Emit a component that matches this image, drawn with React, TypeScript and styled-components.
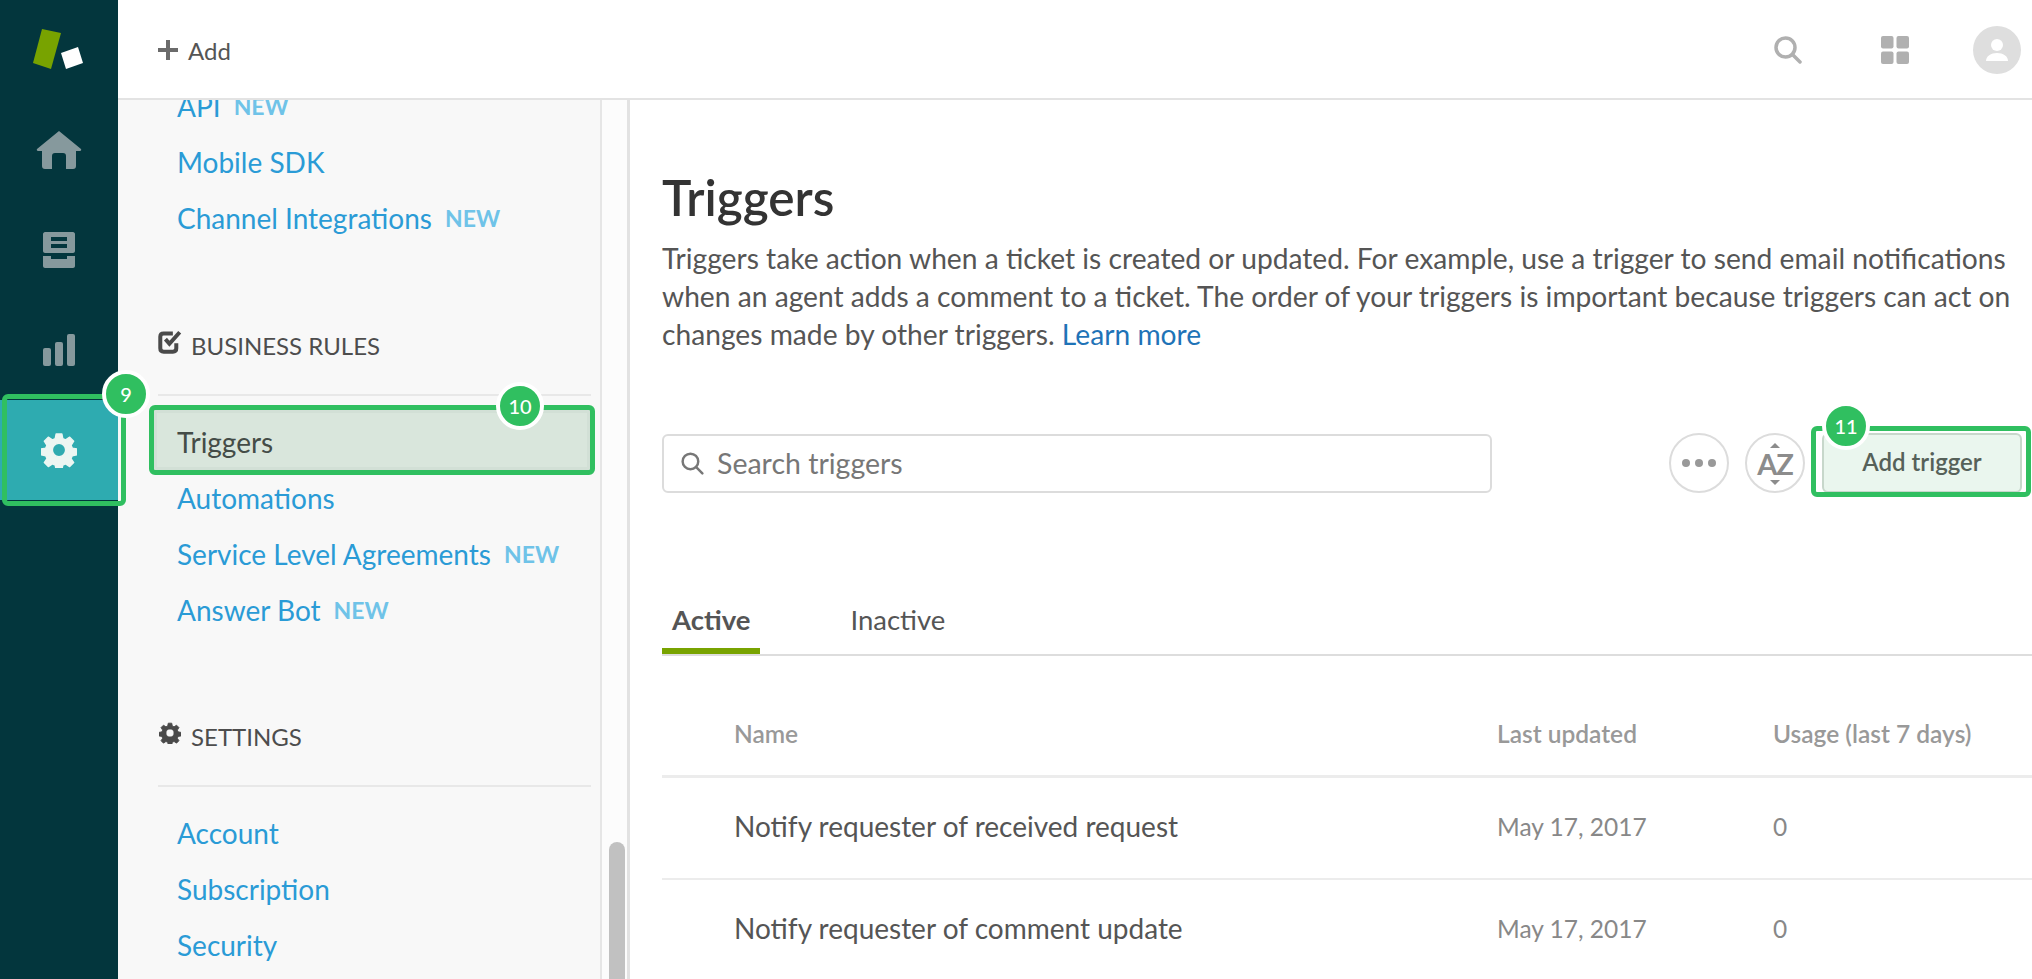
import React from 'react';
import styled, { createGlobalStyle } from 'styled-components';

const FONT = '"Lato", "Open Sans", sans-serif';

const GlobalStyle = createGlobalStyle`
  html, body {
    margin: 0;
    padding: 0;
    height: 100%;
    overflow: hidden;
    background: #fff;
    font-family: ${FONT};
  }
  * { box-sizing: border-box; }
`;

const Page = styled.div`
  display: flex;
  width: 2032px;
  height: 979px;
  overflow: hidden;
`;

const Rail = styled.nav`
  width: 118px;
  flex-shrink: 0;
  background: #03363d;
  display: flex;
  flex-direction: column;
  position: relative;
  z-index: 2;
`;

const LogoBox = styled.div`
  height: 100px;
  display: flex;
  align-items: flex-start;
  justify-content: center;
`;

const RailItem = styled.div<{ $active?: boolean }>`
  height: 100px;
  display: flex;
  align-items: center;
  justify-content: center;
  position: relative;
  background: ${(p) => (p.$active ? '#2eabb0' : 'transparent')};
`;

const RailOutline = styled.div`
  position: absolute;
  left: 2px;
  top: -6px;
  width: 124px;
  height: 112px;
  border: 5px solid #30bf60;
  border-radius: 6px;
`;

const Badge = styled.div`
  position: absolute;
  width: 48px;
  height: 48px;
  border-radius: 50%;
  background: #30bf60;
  border: 4px solid #fff;
  color: #fff;
  font-size: 20px;
  font-weight: 500;
  display: flex;
  align-items: center;
  justify-content: center;
  z-index: 3;
`;

const RailBadge = styled(Badge)`
  left: 102px;
  top: -30px;
`;

const Right = styled.div`
  flex: 1;
  display: flex;
  flex-direction: column;
  min-width: 0;
`;

const Header = styled.header`
  height: 100px;
  flex-shrink: 0;
  background: #fff;
  border-bottom: 2px solid #e3e3e3;
  display: flex;
  align-items: center;
  padding: 2px 11px 0 40px;
  position: relative;
  z-index: 1;
`;

const AddButton = styled.div`
  display: flex;
  align-items: center;
  gap: 10px;
  color: #555;
  font-size: 24px;
  flex: 1;
`;

const HeaderIcons = styled.div`
  display: flex;
  align-items: center;
  gap: 79px;
`;

const Avatar = styled.div`
  width: 48px;
  height: 48px;
  border-radius: 50%;
  background: #dedede;
  display: flex;
  align-items: center;
  justify-content: center;
  margin-left: -15px;
`;

const Body = styled.div`
  flex: 1;
  display: flex;
  min-height: 0;
`;

const Sidebar = styled.aside`
  width: 484px;
  flex-shrink: 0;
  background: #f8f8f8;
  border-right: 2px solid #e6e6e6;
  overflow: hidden;
`;

const SideInner = styled.div`
  margin-top: -22px;
  padding: 0 9px 0 40px;
`;

const SideLink = styled.div<{ $active?: boolean }>`
  height: 56px;
  padding-left: 19px;
  display: flex;
  align-items: center;
  gap: 13px;
  font-size: 28px;
  color: ${(p) => (p.$active ? '#444c47' : '#2a9bd6')};
  position: relative;
`;

const New = styled.span`
  color: #6fc3e8;
  font-size: 23px;
  font-weight: 700;
`;

const SideHeading = styled.div<{ $top: number }>`
  margin-top: ${(p) => p.$top}px;
  height: 70px;
  padding-bottom: 28px;
  display: flex;
  align-items: center;
  gap: 9px;
  font-size: 24px;
  color: #4d4d4d;
  & > svg {
    margin-top: -6px;
  }
`;

const SideRule = styled.div`
  height: 2px;
  background: #e8e8e8;
  margin-bottom: 18px;
`;

const TriggerHighlight = styled.div`
  position: absolute;
  left: -9px;
  right: -4px;
  top: -9px;
  bottom: -5px;
  border: 5px solid #30bf60;
  border-radius: 6px;
  background: #d9e6dc;
  box-shadow: inset 0 0 0 3px #d2e0d6;
`;

const LinkText = styled.span`
  position: relative;
`;

const TriggerBadge = styled(Badge)`
  left: 338px;
  top: -32px;
`;

const Track = styled.div`
  width: 28px;
  flex-shrink: 0;
  background: #fcfcfc;
  border-right: 3px solid #e2e2e2;
  padding: 742px 2px 0 7px;
`;

const Thumb = styled.div`
  width: 16px;
  height: 300px;
  border-radius: 8px;
  background: #c1c1c1;
`;

const Main = styled.main`
  flex: 1;
  min-width: 0;
  padding: 67px 0 0 32px;
  overflow: hidden;
`;

const Title = styled.h1`
  margin: 0;
  font-size: 49.5px;
  line-height: 60px;
  font-weight: 600;
  color: #333;
`;

const Description = styled.p`
  margin: 12px 0 0;
  width: 1380px;
  font-size: 28.2px;
  line-height: 38px;
  color: #555;
`;

const LearnMore = styled.a`
  color: #1f73b7;
`;

const Actions = styled.div`
  display: flex;
  align-items: center;
  gap: 16px;
  margin-top: 80px;
  height: 60px;
`;

const SearchBox = styled.div`
  width: 830px;
  height: 59px;
  margin-right: 161px;
  border: 2px solid #dcdcdc;
  border-radius: 6px;
  display: flex;
  align-items: center;
  gap: 13px;
  padding-left: 17px;
  color: #777;
  font-size: 28.5px;
`;

const RoundButton = styled.div`
  width: 60px;
  height: 60px;
  flex-shrink: 0;
  border: 2px solid #dcdcdc;
  border-radius: 50%;
  display: flex;
  align-items: center;
  justify-content: center;
  gap: 5px;
`;

const Dot = styled.span`
  width: 8px;
  height: 8px;
  border-radius: 50%;
  background: #999;
`;

const SortLabel = styled.span`
  position: relative;
  font-size: 29px;
  font-weight: 700;
  letter-spacing: -1px;
  color: #8c8c8c;
  line-height: 1;
  &::before,
  &::after {
    content: '';
    position: absolute;
    left: 50%;
    margin-left: -5px;
    border-left: 5px solid transparent;
    border-right: 5px solid transparent;
  }
  &::before {
    top: -6px;
    border-bottom: 5px solid #8c8c8c;
  }
  &::after {
    bottom: -7px;
    border-top: 5px solid #8c8c8c;
  }
`;

const TriggerWrap = styled.div`
  position: relative;
  flex-shrink: 0;
  margin-left: 1px;
`;

const TriggerOutline = styled.div`
  position: absolute;
  left: -11px;
  right: -9px;
  top: -7px;
  bottom: -4px;
  border: 5px solid #30bf60;
  border-radius: 6px;
`;

const AddTrigger = styled.div`
  width: 200px;
  height: 60px;
  padding-bottom: 3px;
  background: #eaf6ee;
  border: 2px solid #c7d7cb;
  border-radius: 6px;
  color: #566159;
  font-size: 24px;
  font-weight: 600;
  display: flex;
  align-items: center;
  justify-content: center;
`;

const ButtonBadge = styled(Badge)`
  left: 0;
  top: -31px;
`;

const Tabs = styled.div`
  display: flex;
  margin-top: 96px;
  height: 67px;
  border-bottom: 2px solid #dddddd;
`;

const Tab = styled.div<{ $active?: boolean }>`
  height: 65px;
  padding: 14px 10px 0;
  min-width: 98px;
  margin-right: ${(p) => (p.$active ? 80 : 0)}px;
  font-size: 27.5px;
  font-weight: ${(p) => (p.$active ? 700 : 400)};
  color: #555;
  border-bottom: ${(p) => (p.$active ? '6px solid #78a300' : 'none')};
`;

const TableRow = styled.div<{ $head?: boolean }>`
  display: grid;
  grid-template-columns: 763px 276px 1fr;
  padding-left: 72px;
  align-items: center;
  height: ${(p) => (p.$head ? 122 : 102)}px;
  padding-top: ${(p) => (p.$head ? 36 : 0)}px;
  padding-bottom: ${(p) => (p.$head ? 0 : 4)}px;
  border-bottom: ${(p) => (p.$head ? 3 : 2)}px solid #ececec;
  font-size: ${(p) => (p.$head ? 24.5 : 28)}px;
  font-weight: ${(p) => (p.$head ? 600 : 400)};
  color: ${(p) => (p.$head ? '#999' : '#555')};
`;

const Muted = styled.span`
  color: #888;
  font-size: 24.5px;
`;

const GEAR_PATH =
  'M15 1h6l1 5 3 1.300 4.300-2.800 4.200 4.200-2.800 4.300 1.300 3 5 1v6l-5 1-1.300 3 2.800 4.300-4.200 4.200-4.300-2.800-3 1.300-1 5h-6l-1-5-3-1.300-4.300 2.800-4.200-4.200 2.800-4.300-1.300-3-5-1v-6l5-1 1.300-3-2.800-4.300 4.200-4.200 4.300 2.800 3-1.300zM18 11a7 7 0 1 0 0 14a7 7 0 1 0 0-14z';

const GearIcon = styled.svg<{ $inset?: number }>`
  flex-shrink: 0;
  margin: 0 ${(p) => p.$inset ?? 0}px;
`;

const RailGear = () => (
  <GearIcon width="36" height="36" viewBox="-1 -1 38 38">
    <path fillRule="evenodd" fill="#ecf6f2" stroke="#ecf6f2" strokeWidth="1.500" strokeLinejoin="round" d={GEAR_PATH} />
  </GearIcon>
);

const SmallGear = () => (
  <GearIcon width="22" height="22" viewBox="-1 -1 38 38" $inset={1}>
    <path fillRule="evenodd" fill="#4a4a4a" stroke="#4a4a4a" strokeWidth="1.500" strokeLinejoin="round" d={GEAR_PATH} />
  </GearIcon>
);

const Logo = () => (
  <svg width="118" height="98" viewBox="0 0 118 98">
    <polygon points="42,29 61,33 51,69 33,63" fill="#78a300" />
    <polygon points="61,53 78,47 83,63 66,69" fill="#fff" />
  </svg>
);

const HomeIcon = () => (
  <svg width="46" height="38" viewBox="0 0 46 38">
    <path
      fill="#86999d"
      d="M23 0l22 18c.6.800 0 2-1 2h-4v15c0 1.700-1 3-3 3h-7V25c0-2-1-3-3-3h-8c-2 0-3 1-3 3v13H9c-2 0-3-1.300-3-3V20H2c-1 0-1.600-1.200-1-2z"
    />
  </svg>
);

const InboxIcon = () => (
  <svg width="32" height="36" viewBox="0 0 32 36">
    <path
      fill="#86999d"
      fillRule="evenodd"
      d="M2 0h28c1 0 2 1 2 2v17c0 1-1 2-2 2H2c-1 0-2-1-2-2V2c0-1 1-2 2-2zM8 5v4h16V5zM8 12v4h16v-4z"
    />
    <path fill="#86999d" d="M0 24h8v3h16v-3h8v10c0 1-1 2-2 2H2c-1 0-2-1-2-2z" />
  </svg>
);

const BarsIcon = () => (
  <svg width="32" height="32" viewBox="0 0 32 32">
    <rect x="0" y="14" width="8" height="18" rx="2" fill="#86999d" />
    <rect x="12" y="8" width="8" height="24" rx="2" fill="#86999d" />
    <rect x="24" y="0" width="8" height="32" rx="2" fill="#86999d" />
  </svg>
);

const SearchGlyph = ({ size, color, stroke }: { size: number; color: string; stroke: number }) => (
  <svg width={size} height={size} viewBox="0 0 28 28" fill="none">
    <circle cx="11.500" cy="11.500" r="9.500" stroke={color} strokeWidth={stroke} />
    <line x1="18.500" y1="18.500" x2="26" y2="26" stroke={color} strokeWidth={stroke} strokeLinecap="round" />
  </svg>
);

const GridIcon = () => (
  <svg width="28" height="28" viewBox="0 0 28 28">
    <rect x="0" y="0" width="12.500" height="12.500" rx="2" fill="#b0b0b0" />
    <rect x="15.500" y="0" width="12.500" height="12.500" rx="2" fill="#b0b0b0" />
    <rect x="0" y="15.500" width="12.500" height="12.500" rx="2" fill="#b0b0b0" />
    <rect x="15.500" y="15.500" width="12.500" height="12.500" rx="2" fill="#b0b0b0" />
  </svg>
);

const PersonIcon = () => (
  <svg width="24" height="24" viewBox="0 0 24 24">
    <circle cx="12" cy="7" r="6" fill="#fff" />
    <path d="M1 23c0-5 5-8 11-8s11 3 11 8z" fill="#fff" />
  </svg>
);

const PlusIcon = () => (
  <svg width="20" height="20" viewBox="0 0 20 20">
    <path d="M8 0h4v8h8v4h-8v8H8v-8H0V8h8z" fill="#6b6b6b" />
  </svg>
);

const CheckBoxIcon = () => (
  <svg width="24" height="24" viewBox="1 1 21 21" fill="none">
    <path d="M17 12.500V17c0 2-1 3-3 3H6c-2 0-3-1-3-3V7c0-2 1-3 3-3h8" stroke="#4a4a4a" strokeWidth="3.500" />
    <path d="M7.500 9l3.500 4 9-10" stroke="#4a4a4a" strokeWidth="3.500" />
  </svg>
);

const rows = [
  { name: 'Notify requester of received request', date: 'May 17, 2017', usage: '0' },
  { name: 'Notify requester of comment update', date: 'May 17, 2017', usage: '0' },
];

const App: React.FC = () => (
  <>
    <GlobalStyle />
    <Page>
      <Rail>
        <LogoBox>
          <Logo />
        </LogoBox>
        <RailItem>
          <HomeIcon />
        </RailItem>
        <RailItem>
          <InboxIcon />
        </RailItem>
        <RailItem>
          <BarsIcon />
        </RailItem>
        <RailItem $active>
          <RailGear />
          <RailOutline />
          <RailBadge>9</RailBadge>
        </RailItem>
      </Rail>
      <Right>
        <Header>
          <AddButton>
            <PlusIcon />
            Add
          </AddButton>
          <HeaderIcons>
            <SearchGlyph size={28} color="#b0b0b0" stroke={3.5} />
            <GridIcon />
            <Avatar>
              <PersonIcon />
            </Avatar>
          </HeaderIcons>
        </Header>
        <Body>
          <Sidebar>
            <SideInner>
              <SideLink>
                API <New>NEW</New>
              </SideLink>
              <SideLink>Mobile SDK</SideLink>
              <SideLink>
                Channel Integrations <New>NEW</New>
              </SideLink>
              <SideHeading $top={78}>
                <CheckBoxIcon />
                BUSINESS RULES
              </SideHeading>
              <SideRule />
              <SideLink $active>
                <TriggerHighlight />
                <LinkText>Triggers</LinkText>
                <TriggerBadge>10</TriggerBadge>
              </SideLink>
              <SideLink>Automations</SideLink>
              <SideLink>
                Service Level Agreements <New>NEW</New>
              </SideLink>
              <SideLink>
                Answer Bot <New>NEW</New>
              </SideLink>
              <SideHeading $top={77}>
                <SmallGear />
                SETTINGS
              </SideHeading>
              <SideRule />
              <SideLink>Account</SideLink>
              <SideLink>Subscription</SideLink>
              <SideLink>Security</SideLink>
            </SideInner>
          </Sidebar>
          <Track>
            <Thumb />
          </Track>
          <Main>
            <Title>Triggers</Title>
            <Description>
              Triggers take action when a ticket is created or updated. For example, use a trigger to send email
              notifications when an agent adds a comment to a ticket. The order of your triggers is important because
              triggers can act on changes made by other triggers. <LearnMore>Learn more</LearnMore>
            </Description>
            <Actions>
              <SearchBox>
                <SearchGlyph size={23} color="#777" stroke={3} />
                Search triggers
              </SearchBox>
              <RoundButton>
                <Dot />
                <Dot />
                <Dot />
              </RoundButton>
              <RoundButton>
                <SortLabel>AZ</SortLabel>
              </RoundButton>
              <TriggerWrap>
                <TriggerOutline />
                <AddTrigger>Add trigger</AddTrigger>
                <ButtonBadge>11</ButtonBadge>
              </TriggerWrap>
            </Actions>
            <Tabs>
              <Tab $active>Active</Tab>
              <Tab>Inactive</Tab>
            </Tabs>
            <TableRow $head>
              <span>Name</span>
              <span>Last updated</span>
              <span>Usage (last 7 days)</span>
            </TableRow>
            {rows.map((r) => (
              <TableRow key={r.name}>
                <span>{r.name}</span>
                <Muted>{r.date}</Muted>
                <Muted>{r.usage}</Muted>
              </TableRow>
            ))}
          </Main>
        </Body>
      </Right>
    </Page>
  </>
);

export default App;
